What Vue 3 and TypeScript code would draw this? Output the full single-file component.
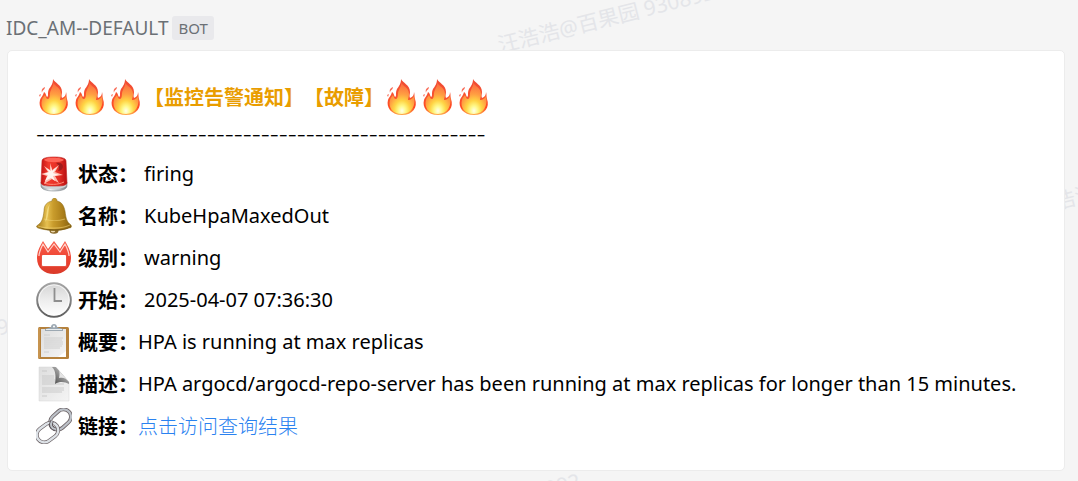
<script setup lang="ts">
interface Row { icon: string; label: string; value: string; spaced?: boolean; link?: boolean }

const rows: Row[] = [
  { icon: 'siren', label: '状态：', value: 'firing', spaced: true },
  { icon: 'bell', label: '名称：', value: 'KubeHpaMaxedOut', spaced: true },
  { icon: 'badge', label: '级别：', value: 'warning', spaced: true },
  { icon: 'clock', label: '开始：', value: '2025-04-07 07:36:30', spaced: true },
  { icon: 'clipboard', label: '概要：', value: 'HPA is running at max replicas' },
  { icon: 'page', label: '描述：', value: 'HPA argocd/argocd-repo-server has been running at max replicas for longer than 15 minutes.' },
  { icon: 'chain', label: '链接：', value: '点击访问查询结果', link: true },
]
const divider = '-'.repeat(50)
</script>

<template>
  <main class="chat">
    <svg class="defs" width="0" height="0" aria-hidden="true">
      <defs>
        <linearGradient id="flameOuter" x1="0" y1="0" x2="0" y2="1">
          <stop offset="0" stop-color="#ee4a34" /><stop offset=".5" stop-color="#f9532f" /><stop offset=".8" stop-color="#ff4a22" /><stop offset="1" stop-color="#ffb050" />
        </linearGradient>
        <radialGradient id="flameInner" cx=".5" cy=".9" r=".85">
          <stop offset="0" stop-color="#ffffec" /><stop offset=".18" stop-color="#fff98a" /><stop offset=".38" stop-color="#ffd444" /><stop offset=".62" stop-color="#ff9d42" /><stop offset="1" stop-color="#fb6a40" />
        </radialGradient>
        <linearGradient id="redGlass" x1="0" y1="0" x2="1" y2="0">
          <stop offset="0" stop-color="#c51414" /><stop offset=".3" stop-color="#f23a2d" /><stop offset=".7" stop-color="#e22d23" /><stop offset="1" stop-color="#b80f12" />
        </linearGradient>
        <linearGradient id="steel" x1="0" y1="0" x2="1" y2="0">
          <stop offset="0" stop-color="#8b9299" /><stop offset=".35" stop-color="#f0f2f3" /><stop offset=".7" stop-color="#b7bdc1" /><stop offset="1" stop-color="#7b8187" />
        </linearGradient>
        <linearGradient id="gold" x1="0" y1="0" x2="1" y2="0">
          <stop offset="0" stop-color="#a07414" /><stop offset=".3" stop-color="#e6c050" /><stop offset=".48" stop-color="#c99c2c" /><stop offset=".75" stop-color="#ac7f1a" /><stop offset="1" stop-color="#84600f" />
        </linearGradient>
        <linearGradient id="badgeRed" x1="0" y1="0" x2="0" y2="1">
          <stop offset="0" stop-color="#f8604f" /><stop offset=".55" stop-color="#ee4331" /><stop offset="1" stop-color="#d93a2a" />
        </linearGradient>
        <linearGradient id="clockRim" x1="0" y1="0" x2="0" y2="1">
          <stop offset="0" stop-color="#a5a5a5" /><stop offset="1" stop-color="#606060" />
        </linearGradient>
        <linearGradient id="clockFace" x1="0" y1="0" x2="0" y2="1">
          <stop offset="0" stop-color="#d4d4d4" /><stop offset=".5" stop-color="#ededed" /><stop offset="1" stop-color="#ffffff" />
        </linearGradient>
        <linearGradient id="paper" x1="0" y1="0" x2="1" y2="1">
          <stop offset="0" stop-color="#dedede" /><stop offset="1" stop-color="#f4f4f4" />
        </linearGradient>
        <linearGradient id="fold" x1="0" y1="1" x2="1" y2="0">
          <stop offset="0" stop-color="#444444" /><stop offset=".45" stop-color="#8a8a8a" /><stop offset="1" stop-color="#dddddd" />
        </linearGradient>
        <symbol id="fire" viewBox="0 0 36 36">
          <path fill="url(#flameOuter)" d="M17 0c2 4 9 6 9 13 0 2-1 4 0 6 3-1 4-3 4-6 1 3 0 4 1 7 3 8-2 16-13 16S2 28 4 21c1-3 3-4 4-8 2 1 2 4 3 5 2-1 0-4 2-8 2-3 4-5 4-10z" />
          <path fill="url(#flameInner)" d="M17 3c2 5 8 5 8 12 0 3-1 4-1 6 3 0 5-2 6-4 2 9-2 18-12 18S4 28 6 21c0-2 2-3 3-5 1 2 1 4 3 4 3-1 1-6 3-9 1-3 3-5 2-8z" />
          <path fill="#f8705c" d="M9 8c0 3-3 3-3 6-1-3 0-5 3-6zM5 15l-1 3-1-2z" />
        </symbol>
        <symbol id="siren" viewBox="0 0 36 36">
          <path fill="url(#steel)" stroke="#858b90" stroke-width=".6" d="M5 26h26v4c0 3-5 5-13 5S5 33 5 30z" />
          <ellipse cx="18" cy="29" rx="12.500" ry="4" fill="#d0d5d7" />
          <path fill="url(#redGlass)" stroke="#bd2522" stroke-width=".6" d="M6 5c0-3 5-4 12-4s12 1 12 4l1 22c-1 3-6 3-13 3S6 30 5 27z" />
          <path fill="#ff6558" d="M8 4c2-3 17-3 20 0-4 3-16 3-20 0z" />
          <path fill="#a01c1c" d="M20 7c5-1 7 1 7 4-1 3-3 4-5 4 2-3 1-6-2-8z" />
          <path fill="#ffb9ad" d="M14 7l2 7 7-5-4 7 8 3-8 1 4 7-7-4-8 5 3-8-6-2 7-2-4-6 6 4z" />
          <path fill="#fff5f0" d="M15 10l1 5 5-4-4 6 6 2-6 1 2 5-4-3-6 3 3-6-4-1 5-2-3-4 5 3z" />
          <path fill="none" stroke="#ff8a76" stroke-width="1" d="M8 27c5 2 14 2 20-1" />
        </symbol>
        <symbol id="bell" viewBox="0 0 36 36">
          <ellipse cx="18" cy="32.500" rx="4.500" ry="3.200" fill="#8a6a2a" />
          <ellipse cx="17" cy="32.800" rx="2.300" ry="1.600" fill="#ead6aa" />
          <path fill="url(#gold)" stroke="#8a6914" stroke-width=".5" d="M16 3c0-4 5-4 5 0 5 1 7 5 8 10 1 8 2 11 6 14 1 2 0 3-2 3-7 3-23 3-31 0-2-1-2-2 0-3 4-3 5-6 6-14 0-6 3-9 8-10z" />
          <path fill="#806017" d="M3 29c7 3 23 3 31 0-6 5-25 5-31 0z" />
          <path fill="none" stroke="#f2d578" stroke-width="1.200" d="M2 28c8 3 24 3 32-1M8 21c6 2 15 2 21 0" opacity=".55" />
          <path fill="#fff1a2" opacity=".55" d="M14 6c-4 4-3 12-5 18 4-3 3-14 5-18z" />
        </symbol>
        <symbol id="badge" viewBox="0 0 36 36">
          <path fill="url(#badgeRed)" d="M1 18C1 11 4 6 7 1l5 8 6-8 6 8 5-8c3 5 6 10 6 17 0 10-7 16-17 16S1 28 1 18z" />
          <path fill="none" stroke="#ffd3cc" stroke-width="1.200" stroke-linejoin="round" d="M3 16c0-4 2-8 4-12l5 8 6-8 6 8 5-8c2 4 4 8 4 12" />
          <rect x="5" y="15" width="26" height="12" rx="1" fill="#e85545" />
          <rect x="6" y="15" width="24" height="11" rx="1" fill="#fff" />
        </symbol>
        <symbol id="clock" viewBox="0 0 36 36">
          <circle cx="18" cy="18" r="16.800" fill="url(#clockFace)" stroke="url(#clockRim)" stroke-width="2" />
          <circle cx="18" cy="18" r="15.200" fill="none" stroke="#fff" stroke-width="1" opacity=".7" />
          <path fill="none" stroke="#8e8e8e" stroke-width="1.800" d="M18.500 6v13H26" />
        </symbol>
        <symbol id="clipboard" viewBox="0 0 36 36">
          <rect x="2" y="3" width="31" height="32" rx="1.500" fill="#b5813c" />
          <path stroke="#d9a763" d="M3 4v30" />
          <path fill="url(#paper)" d="M5 5h25v28H5z" />
          <path fill="#fff" d="M22 33l8-6v6z" />
          <path stroke="#c9c9c9" stroke-width=".8" d="M8 11h6M8 14h19M8 16h18M8 18h19M8 20h19M8 22h18M8 24h16M8 28h5" />
          <path fill="#9ca8b2" d="M9 7V5c2-1 5-1 6-2 0-4 6-4 6 0 1 1 4 1 6 2v2z" />
          <path fill="#e8edef" d="M10 5h16v1H10z" /><circle cx="18" cy="2.500" r="1" fill="#fff" />
        </symbol>
        <symbol id="page" viewBox="0 0 36 36">
          <path fill="url(#paper)" stroke="#d7d7d7" stroke-width=".5" d="M3 1h16l14 15v19H3z" />
          <path stroke="#c3c3c3" stroke-width=".8" d="M6 5h5M6 10h12M6 12h12M6 14h13M6 16h13M6 18h22M6 22h22M6 24h22M6 26h20M6 30h5" />
          <path fill="url(#fold)" d="M16 1h4l13 15v2c-4-2-9-3-14 0 1-7 1-13-3-17z" />
          <path fill="#e4e4e4" d="M20 1c4 2 4 7 3 11 4-1 7 0 10 4z" />
        </symbol>
        <symbol id="chain" viewBox="0 0 36 36">
          <g fill="none">
            <rect x="13" y="4" width="23" height="15" rx="7.500" transform="rotate(-42 24.500 11.500)" stroke="#6b6265" stroke-width="3.800" />
            <rect x="13" y="4" width="23" height="15" rx="7.500" transform="rotate(-42 24.500 11.500)" stroke="#bcc1c8" stroke-width="2.200" />
            <rect x="0" y="17" width="23" height="15" rx="7.500" transform="rotate(-36 11.500 24.500)" stroke="#6b6265" stroke-width="3.800" />
            <rect x="0" y="17" width="23" height="15" rx="7.500" transform="rotate(-36 11.500 24.500)" stroke="#dde2e7" stroke-width="2.400" />
            <path stroke="#554d52" stroke-width="3.800" d="M16 13c-2 4-1 7 3 8" />
            <path stroke="#c0c6cc" stroke-width="2" d="M16 13c-2 4-1 7 3 8" />
          </g>
        </symbol>
      </defs>
    </svg>

    <span class="mark mark-top">汪浩浩@百果园 930892</span>
    <span class="mark mark-right">汪浩浩@百果园 930892</span>
    <span class="mark mark-left">汪浩浩@百果园 930892</span>
    <span class="mark mark-bottom">汪浩浩@百果园 930892</span>

    <header class="sender">
      <span>IDC_AM--DEFAULT</span>
      <span class="bot">BOT</span>
    </header>

    <article class="card">
      <h1 class="title">
        <svg v-for="n in 3" :key="n" class="icon" aria-hidden="true"><use href="#fire" /></svg>
        <span>【监控告警通知】【故障】</span>
        <svg v-for="n in 3" :key="n + 3" class="icon" aria-hidden="true"><use href="#fire" /></svg>
      </h1>
      <div class="divider">{{ divider }}</div>
      <div v-for="row in rows" :key="row.icon" class="row">
        <svg class="icon" aria-hidden="true"><use :href="'#' + row.icon" /></svg>
        <strong class="label">{{ row.label }}</strong>
        <a v-if="row.link" href="#" class="link">{{ row.value }}</a>
        <span v-else :class="['value', { spaced: row.spaced }]">{{ row.value }}</span>
      </div>
    </article>
  </main>
</template>

<style>
body {
  margin: 0;
  background: #f5f5f5;
}
</style>

<style scoped>
.chat {
  position: relative;
  box-sizing: border-box;
  min-height: 100vh;
  padding: 6px 13px 10px 7px;
  overflow: hidden;
  background: #f5f5f5;
  color: #000;
  font: 20px/42px "Noto Sans", "Noto Sans CJK SC", sans-serif;
}
.defs {
  position: absolute;
}
.sender {
  position: relative;
  display: flex;
  align-items: center;
  gap: 4px;
  height: 44px;
  margin-left: -1px;
  color: #6b7075;
  font-size: 19px;
}
.bot {
  padding: 0 6px;
  border-radius: 3px;
  background: #e9e9ec;
  font-size: 15px;
  line-height: 24px;
}
.card {
  position: relative;
  padding: 25px 28px 23px;
  border: 1px solid #ececec;
  border-radius: 5px;
  background: #fff;
}
.title {
  display: flex;
  align-items: center;
  height: 42px;
  margin: 0;
  color: #e99d00;
  font: bold 20px/44px "Noto Sans CJK SC", sans-serif;
  text-spacing-trim: space-all;
}
.icon {
  flex: none;
  width: 36px;
  height: 36px;
}
.divider {
  padding-bottom: 7px;
  font: 300 27px/28px "Noto Sans CJK SC", sans-serif;
  white-space: nowrap;
}
.row {
  display: flex;
  align-items: center;
  min-height: 42px;
}
.label {
  flex: none;
  margin-left: 6px;
  font-family: "Noto Sans CJK SC", sans-serif;
}
.value {
  white-space: nowrap;
}
.spaced {
  margin-left: 6px;
}
.link {
  color: #2a82f0;
  font-family: "Noto Sans CJK SC", sans-serif;
  font-weight: 300;
  text-decoration: none;
}
.mark {
  position: absolute;
  color: #e4e5e9;
  font: 21px/28px "Noto Sans", "Noto Sans CJK SC", sans-serif;
  white-space: nowrap;
  transform: rotate(-14deg);
  transform-origin: 0 50%;
}
.mark-top {
  top: 31px;
  left: 498px;
}
.mark-right {
  top: 193px;
  left: 1034px;
}
.mark-left {
  top: 350px;
  left: -149px;
}
.mark-bottom {
  top: 520px;
  left: 364px;
}
</style>
